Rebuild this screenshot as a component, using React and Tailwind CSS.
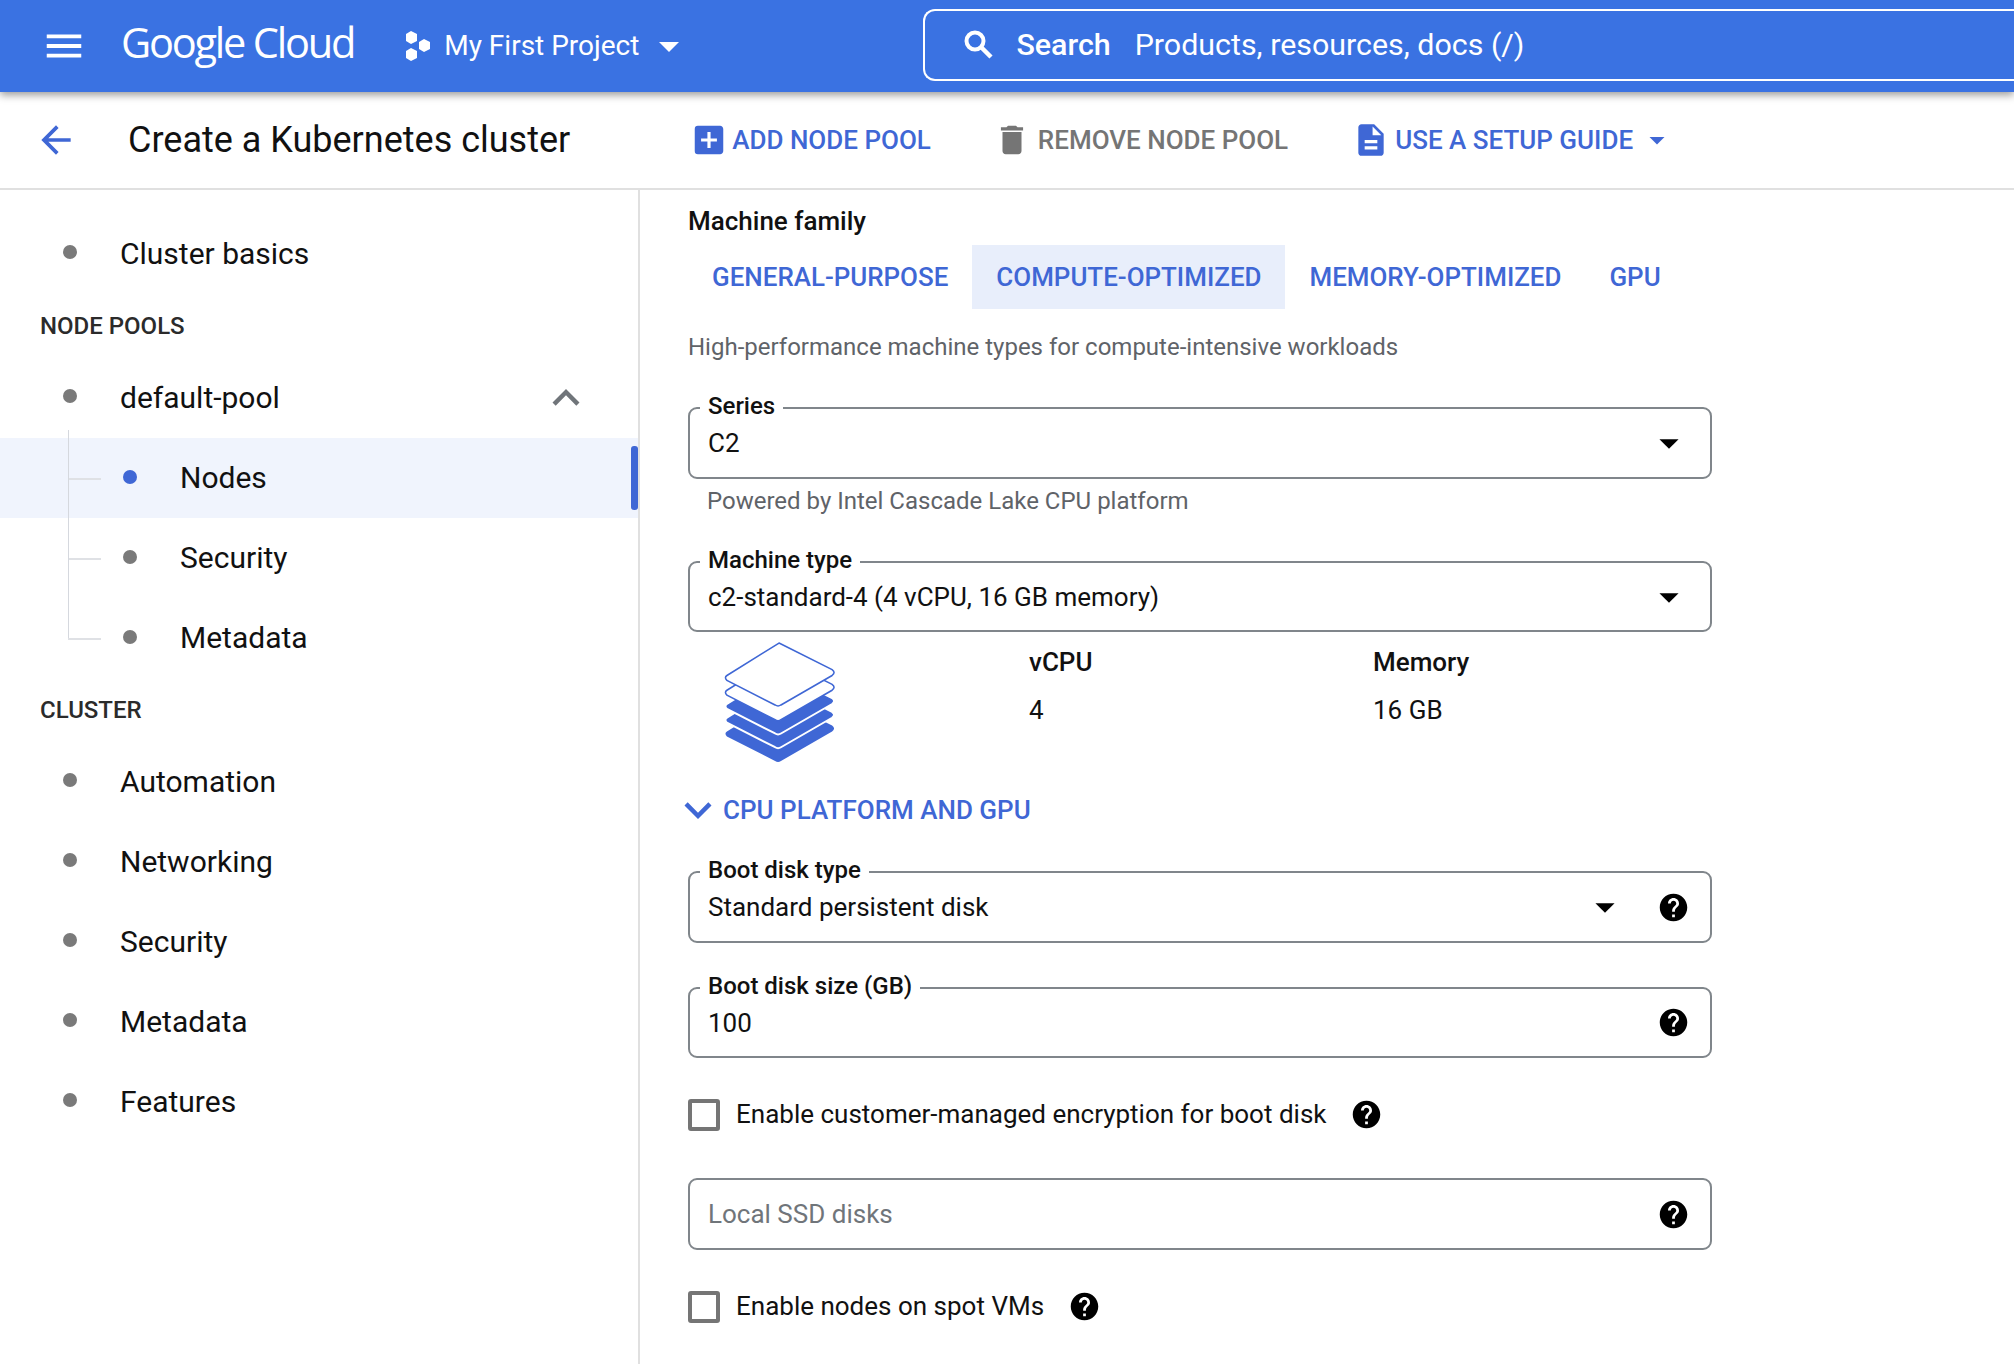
import {
  MdMenu,
  MdArrowBack,
  MdAddBox,
  MdDelete,
  MdDescription,
  MdArrowDropDown,
  MdExpandLess,
  MdExpandMore,
  MdHelp,
} from "react-icons/md";

const roboto = "font-['Roboto',sans-serif]";

const NavRow = ({ label, trailing }) => (
  <div className="flex h-[80px] items-center pl-[63px] pr-[45px] text-[30px] text-[#111]">
    <span className="mb-[4px] h-[14px] w-[14px] rounded-full bg-[#7a7a7a]" />
    <span className="mb-[2px] ml-[43px]">{label}</span>
    {trailing && <span className="ml-auto flex">{trailing}</span>}
  </div>
);

const SubRow = ({ label, active, last }) => (
  <div className={`relative flex h-[80px] items-center pl-[123px] text-[30px] text-[#111] ${active ? "bg-[#f0f4fd]" : ""}`}>
    <span className="absolute left-[68px] top-1/2 h-[2px] w-[33px] bg-[#dfe1e5]" />
    {last && <span className="absolute left-[68px] top-0 h-1/2 w-px bg-[#d5d8de]" />}
    {!last && <span className={`absolute left-[68px] w-px bg-[#d5d8de] ${active ? "top-[-8px] h-[88px]" : "top-0 h-full"}`} />}
    <span className={`mb-[3px] h-[14px] w-[14px] rounded-full ${active ? "bg-[#3f67d5]" : "bg-[#7a7a7a]"}`} />
    <span className="mb-[2px] ml-[43px]">{label}</span>
    {active && <span className="absolute right-0 top-[8px] h-[64px] w-[7px] rounded-[3px] bg-[#3f67d5]" />}
  </div>
);

const Section = ({ children, className }) => (
  <div className={`flex h-[64px] items-center pl-[40px] text-[24px] font-medium text-[#2b2b2b] ${className || ""}`}>
    {children}
  </div>
);

const Field = ({ label, value, dropdown, help, muted, short, className }) => (
  <div className={`relative flex w-[1024px] items-center rounded-[9px] border-2 border-[#80868b] pl-[18px] pr-[20px] text-[26px] ${short ? "h-[71px]" : "h-[72px]"} ${muted ? "text-[#70757a]" : "text-[#111]"} ${className || ""}`}>
    {label && (
      <span className="absolute left-[10px] top-[-19px] bg-white px-[8px] text-[24px] font-medium leading-[32px] text-[#111]">
        {label}
      </span>
    )}
    <span className="mt-[1px]">{value}</span>
    <span className="ml-auto flex items-center">
      {dropdown && <MdArrowDropDown size={46} className={`text-black ${help ? "mr-[29px]" : "mr-[-2px]"}`} />}
      {help && <MdHelp size={33} className="text-black" />}
    </span>
  </div>
);

const CheckRow = ({ label, gap, className }) => (
  <div className={`flex items-center text-[26px] text-[#111] ${className || ""}`}>
    <span className="h-[32px] w-[32px] rounded-[3px] border-[4px] border-[#757575]" />
    <span className="ml-[16px]">{label}</span>
    <MdHelp size={33} className={`text-black ${gap}`} />
  </div>
);

const Tab = ({ children, active }) => (
  <div className={`flex h-[64px] items-center px-[24px] text-[25.95px] font-medium text-[#3f67d5] ${active ? "bg-[#e8eefb]" : ""}`}>
    {children}
  </div>
);

const ToolButton = ({ icon, children, className, grey, gap }) => (
  <div className={`flex items-center text-[26px] font-medium ${grey ? "text-[#757575]" : "text-[#3f67d5]"} ${className || ""}`}>
    {icon}
    <span className={gap}>{children}</span>
  </div>
);

function SearchIcon() {
  return (
    <svg width="38" height="38" viewBox="0 0 38 38" fill="none" stroke="white" className="shrink-0">
      <circle cx="15" cy="15" r="8.5" strokeWidth="4" />
      <line x1="21" y1="21" x2="31" y2="31" strokeWidth="4.5" />
    </svg>
  );
}

function ProjectIcon() {
  return (
    <svg width="28" height="32" viewBox="0 0 28 32" fill="white">
      <polygon points="7,1 13,4 13,11 7,14 2,11 2,4" />
      <polygon points="7,18 13,21 13,28 7,31 2,28 2,21" />
      <polygon points="20,9 26,12 26,19 20,22 15,19 15,12" />
    </svg>
  );
}

function ChipStack() {
  const fill = "M56 0 L110 27 Q114 30 110 33 L58 63 Q55 65 52 63 L3 38 Q0 35 3 33 Z";
  return (
    <svg width="114" height="122" viewBox="-1 -1 116 124">
      <path d={fill} transform="translate(0 57)" fill="#3f67d5" />
      <path d={fill} transform="translate(0 43)" fill="#3f67d5" stroke="white" strokeWidth="2" />
      <path d={fill} transform="translate(0 29)" fill="#3f67d5" stroke="white" strokeWidth="2" />
      <path d={fill} transform="translate(0 15)" fill="white" stroke="#3f67d5" strokeWidth="1.6" />
      <path d={fill} fill="white" stroke="#3f67d5" strokeWidth="1.6" />
    </svg>
  );
}

export default function App() {
  return (
    <div className={`flex h-[1364px] w-[2014px] flex-col overflow-hidden bg-white ${roboto}`}>
      <header className="relative z-10 flex h-[92px] shrink-0 items-center whitespace-nowrap bg-[#3a72e2] pl-[41px] text-white shadow-[0_3px_8px_rgba(0,0,0,0.4)]">
        <MdMenu size={46} className="mr-[-1px] shrink-0" />
        <span className="mb-[6px] ml-[35px] shrink-0 font-['Open_Sans',sans-serif] text-[41.5px] leading-none tracking-[-2.2px] text-white">
          Google Cloud
        </span>
        <span className="ml-[50px] flex shrink-0"><ProjectIcon /></span>
        <span className="ml-[12px] shrink-0 text-[28px]">My First Project</span>
        <MdArrowDropDown size={48} className="ml-[6px] shrink-0" />
        <div className="mb-[3px] ml-[230px] flex h-[72px] w-[1200px] shrink-0 items-center rounded-l-[12px] border-2 border-r-0 border-white pl-[35px] text-[30.4px]">
          <SearchIcon />
          <span className="ml-[18px] font-medium">Search</span>
          <span className="ml-[24px]">Products, resources, docs (/)</span>
        </div>
      </header>

      <div className="flex h-[98px] shrink-0 items-center border-b-2 border-[#e0e0e0] pl-[34px]">
        <MdArrowBack size={44} className="text-[#3f67d5]" />
        <h1 className="ml-[50px] text-[36px] font-normal text-[#111]">Create a Kubernetes cluster</h1>
        <ToolButton className="ml-[120px]" gap="ml-[4px]" icon={<MdAddBox size={38} />}>ADD NODE POOL</ToolButton>
        <ToolButton grey className="ml-[62px]" gap="ml-[7px]" icon={<MdDelete size={38} />}>REMOVE NODE POOL</ToolButton>
        <ToolButton className="ml-[64px]" gap="ml-[5px]" icon={<MdDescription size={38} />}>USE A SETUP GUIDE</ToolButton>
        <MdArrowDropDown size={36} className="ml-[6px] text-[#3f67d5]" />
      </div>

      <div className="flex min-h-0 flex-1">
        <aside className="w-[640px] shrink-0 border-r-2 border-[#e0e0e0] pt-[24px]">
          <NavRow label="Cluster basics" />
          <Section>NODE POOLS</Section>
          <NavRow label="default-pool" trailing={<MdExpandLess size={54} className="text-[#70757a]" />} />
          <SubRow label="Nodes" active />
          <SubRow label="Security" />
          <SubRow label="Metadata" last />
          <Section>CLUSTER</Section>
          <NavRow label="Automation" />
          <NavRow label="Networking" />
          <NavRow label="Security" />
          <NavRow label="Metadata" />
          <NavRow label="Features" />
        </aside>

        <main className="flex-1 pl-[48px]">
          <div className="mt-[13px] text-[26px] font-medium leading-[36px] text-[#111]">Machine family</div>
          <div className="mt-[6px] flex">
            <Tab>GENERAL-PURPOSE</Tab>
            <Tab active>COMPUTE-OPTIMIZED</Tab>
            <Tab>MEMORY-OPTIMIZED</Tab>
            <Tab>GPU</Tab>
          </div>
          <p className="mt-[22px] text-[24px] leading-[32px] text-[#5f6368]">
            High-performance machine types for compute-intensive workloads
          </p>
          <Field className="mt-[44px]" label="Series" value="C2" dropdown />
          <p className="ml-[19px] mt-[6px] text-[24px] leading-[32px] text-[#5f6368]">
            Powered by Intel Cascade Lake CPU platform
          </p>
          <Field short className="mt-[44px]" label="Machine type" value="c2-standard-4 (4 vCPU, 16 GB memory)" dropdown />
          <div className="mt-[10px] flex h-[124px]">
            <div className="ml-[35px] w-[306px]"><ChipStack /></div>
            <div className="w-[344px] text-[26px] text-[#111]">
              <div className="mt-[2px] font-medium leading-[36px]">vCPU</div>
              <div className="mt-[12px] leading-[36px]">4</div>
            </div>
            <div className="text-[26px] text-[#111]">
              <div className="mt-[2px] font-medium leading-[36px]">Memory</div>
              <div className="mt-[12px] leading-[36px]">16 GB</div>
            </div>
          </div>
          <div className="mt-[24px] flex h-[40px] items-center text-[26px] font-medium text-[#3f67d5]">
            <MdExpandMore size={54} className="ml-[-17px]" />
            <span className="ml-[-2px]">CPU PLATFORM AND GPU</span>
          </div>
          <Field className="mt-[41px]" label="Boot disk type" value="Standard persistent disk" dropdown help />
          <Field short className="mt-[44px]" label="Boot disk size (GB)" value="100" help />
          <CheckRow className="mt-[37px]" label="Enable customer-managed encryption for boot disk" gap="ml-[24px]" />
          <Field className="mt-[44px]" value="Local SSD disks" help muted />
          <CheckRow className="mt-[37px]" label="Enable nodes on spot VMs" gap="ml-[24px]" />
        </main>
      </div>
    </div>
  );
}
